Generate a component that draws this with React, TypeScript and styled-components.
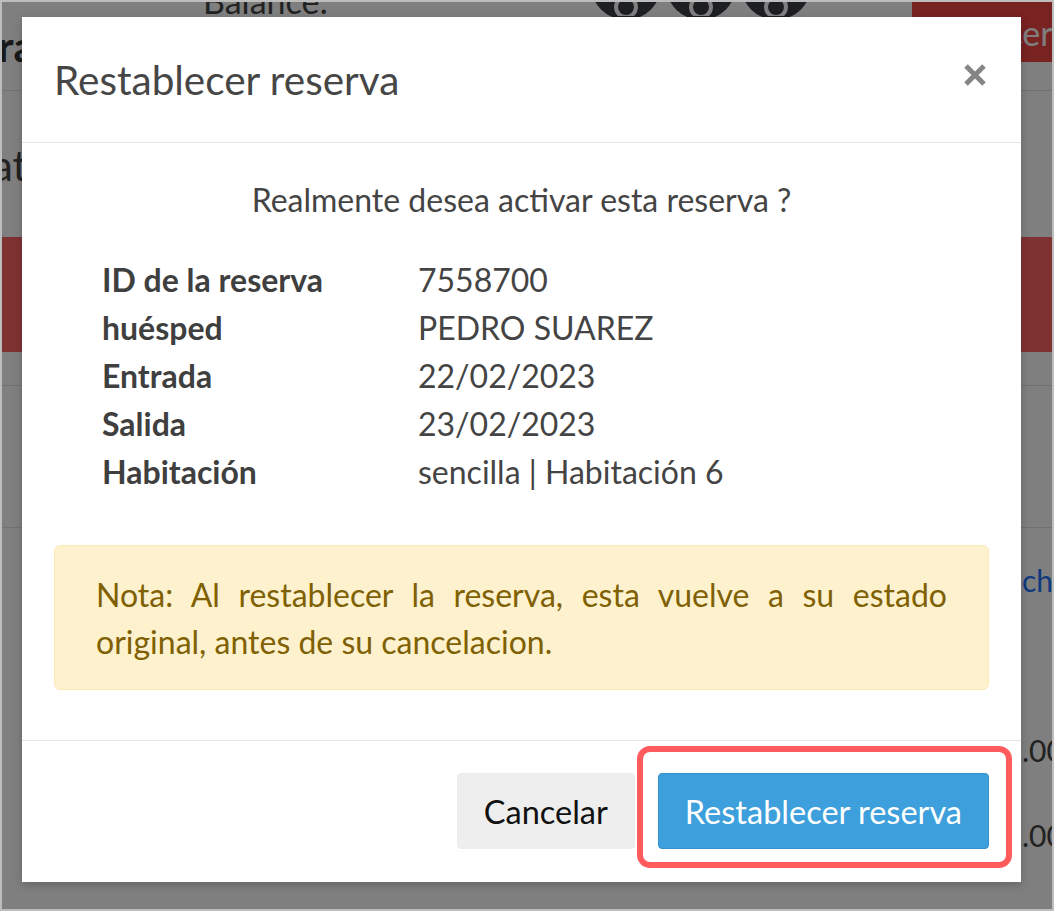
import styled, { createGlobalStyle } from "styled-components";
import { Fragment } from "react";

const GlobalStyle = createGlobalStyle`
  html, body {
    margin: 0;
    padding: 0;
    width: 1054px;
    height: 911px;
    overflow: hidden;
    font-family: Lato, "Open Sans", "Liberation Sans", sans-serif;
  }
`;

// ---- page behind the modal ----

const Page = styled.div`
  position: relative;
  width: 1054px;
  height: 911px;
  background: #ffffff;
  overflow: hidden;
  box-sizing: border-box;
  border: 2px solid #bdbdbd;
`;

const TopBar = styled.div`
  display: flex;
  align-items: flex-start;
  height: 60px;
`;

const PageTitle = styled.h1`
  margin: 24px 0 0 -4px;
  width: 205px;
  flex-shrink: 0;
  font-size: 42px;
  line-height: 40px;
  font-weight: 700;
  color: #333;
`;

const Balance = styled.div`
  margin-top: -22px;
  font-size: 34px;
  color: #444;
  width: 388px;
`;

const RoundButtons = styled.div`
  display: flex;
  gap: 5px;
  margin-top: -52px;
`;

const RoundButton = styled.div`
  width: 70px;
  height: 70px;
  border-radius: 50%;
  background: #3c3e46;
  display: flex;
  align-items: flex-end;
  justify-content: center;
  padding-bottom: 4px;
  box-sizing: border-box;
`;

const LogoutButton = styled.div`
  margin-left: auto;
  margin-right: -90px;
  width: 230px;
  height: 60px;
  background: #f24444;
  color: #fff;
  font-size: 34px;
  display: flex;
  align-items: center;
  padding-left: 36px;
  gap: 30px;
  box-sizing: border-box;
`;

const Rule = styled.div<{ $top: number }>`
  height: 1px;
  background: #e2e2e2;
  margin-top: ${({ $top }) => $top}px;
`;

const SubTitle = styled.div`
  font-size: 42px;
  color: #444;
  margin-left: -10px;
  margin-top: 54px;
  line-height: 40px;
`;

const DangerBand = styled.div`
  margin-top: 52px;
  height: 115px;
  background: #ff6464;
`;

const SideText = styled.div<{ $top: number; $color?: string }>`
  margin-top: ${({ $top }) => $top}px;
  padding-left: 1020px;
  font-size: 30px;
  line-height: 36px;
  white-space: nowrap;
  color: ${({ $color }) => $color || "#444"};
`;

const Overlay = styled.div`
  position: absolute;
  inset: 0;
  background: rgba(0, 0, 0, 0.5);
  display: flex;
  align-items: flex-start;
  padding: 15px 0 0 20px;
`;

// ---- modal ----

const Modal = styled.div`
  width: 999px;
  background: #fff;
  color: #444;
  box-shadow: 0 3px 9px rgba(0, 0, 0, 0.2);
`;

const Header = styled.div`
  height: 125px;
  display: flex;
  align-items: center;
  justify-content: space-between;
  padding: 0 34px 0 32px;
  border-bottom: 1px solid #e5e5e5;
`;

const Title = styled.h4`
  margin: 0;
  font-size: 40.5px;
  font-weight: 400;
  color: #464646;
  line-height: 1;
  padding-top: 2px;
`;

const Close = styled.button`
  border: 0;
  background: none;
  padding: 0;
  width: 24px;
  height: 24px;
  display: flex;
  margin-top: -10px;
  cursor: pointer;
`;

const Body = styled.div`
  padding: 33px 32px 50px;
`;

const Question = styled.p`
  margin: 0 0 32px;
  font-size: 32px;
  line-height: 48px;
  text-align: center;
  color: #444;
`;

const Details = styled.dl`
  margin: 0 0 49px 48px;
  display: grid;
  grid-template-columns: 316px 1fr;
  font-size: 32px;
  line-height: 48px;
`;

const Label = styled.dt`
  font-weight: 700;
  color: #3f3f3f;
`;

const Value = styled.dd`
  margin: 0;
  color: #444;
`;

const Note = styled.div`
  background: #fdf2cd;
  border: 1px solid #fbebb9;
  border-radius: 6px;
  color: #7f6003;
  font-size: 32px;
  line-height: 47px;
  padding: 25px 41px 24px;
  text-align: justify;
`;

const Footer = styled.div`
  display: flex;
  justify-content: flex-end;
  align-items: center;
  gap: 23px;
  padding: 32px 32px 33px;
  border-top: 1px solid #e5e5e5;
`;

const Button = styled.button<{ $primary?: boolean }>`
  height: 76px;
  padding: 0 26px;
  font-family: Lato, "Open Sans", "Liberation Sans", sans-serif;
  font-size: 32.5px;
  border-radius: 4px;
  border: 1px solid ${({ $primary }) => ($primary ? "#3790cc" : "#ececec")};
  background: ${({ $primary }) => ($primary ? "#3d9fdb" : "#eeeeee")};
  color: ${({ $primary }) => ($primary ? "#fff" : "#111")};
  cursor: pointer;
`;

const Highlight = styled.div`
  position: relative;
  display: flex;

  &::after {
    content: "";
    position: absolute;
    inset: -27px -23px -19px -21px;
    border: 6px solid #ff5a5c;
    border-radius: 13px;
    pointer-events: none;
  }
`;

const details: [string, string][] = [
  ["ID de la reserva", "7558700"],
  ["huésped", "PEDRO SUAREZ"],
  ["Entrada", "22/02/2023"],
  ["Salida", "23/02/2023"],
  ["Habitación", "sencilla | Habitación 6"],
];

export default function App() {
  return (
    <>
      <GlobalStyle />
      <Page>
        <TopBar>
          <PageTitle>ra</PageTitle>
          <Balance>Balance:</Balance>
          <RoundButtons>
            {[0, 1, 2].map((i) => (
              <RoundButton key={i}>
                <svg width="34" height="26" viewBox="0 0 34 26" fill="none" stroke="#fff" strokeWidth="4">
                  <circle cx="17" cy="17" r="10" />
                </svg>
              </RoundButton>
            ))}
          </RoundButtons>
          <LogoutButton>
            <svg width="22" height="22" viewBox="0 0 22 22" fill="#fff">
              <circle cx="11" cy="11" r="9" />
            </svg>
            Cerrar
          </LogoutButton>
        </TopBar>
        <Rule $top={28} />
        <SubTitle>at</SubTitle>
        <DangerBand />
        <Rule $top={33} />
        <Rule $top={141} />
        <SideText $top={34} $color="#1c72ff">
          ch
        </SideText>
        <SideText $top={134}>.00</SideText>
        <SideText $top={49}>.00</SideText>

        <Overlay>
          <Modal role="dialog">
            <Header>
              <Title>Restablecer reserva</Title>
              <Close aria-label="Cerrar">
                <svg width="24" height="24" viewBox="0 0 24 24">
                  <path d="M3 3 L21 21 M21 3 L3 21" stroke="#858585" strokeWidth="5" />
                </svg>
              </Close>
            </Header>
            <Body>
              <Question>Realmente desea activar esta reserva ?</Question>
              <Details>
                {details.map(([k, v]) => (
                  <Fragment key={k}>
                    <Label>{k}</Label>
                    <Value>{v}</Value>
                  </Fragment>
                ))}
              </Details>
              <Note>
                Nota: Al restablecer la reserva, esta vuelve a su estado original, antes de su
                cancelacion.
              </Note>
            </Body>
            <Footer>
              <Button>Cancelar</Button>
              <Highlight>
                <Button $primary>Restablecer reserva</Button>
              </Highlight>
            </Footer>
          </Modal>
        </Overlay>
      </Page>
    </>
  );
}
